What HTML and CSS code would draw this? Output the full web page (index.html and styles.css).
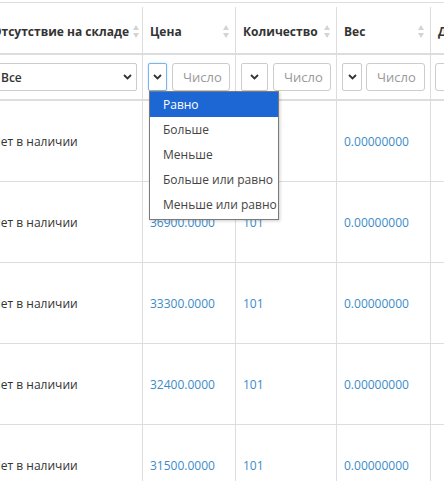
FILE: index.html
```html
<!DOCTYPE html>
<html lang="ru">
<head>
<meta charset="utf-8">
<title>Товары</title>
<link rel="stylesheet" href="styles.css">
</head>
<body>
<div class="page">
  <div class="topline"></div>
  <div class="tablewrap">
    <table class="grid">
      <colgroup>
        <col class="c1"><col class="c2"><col class="c3"><col class="c4"><col class="c5">
      </colgroup>
      <thead>
        <tr class="head-row">
          <th><div class="th-in"><span>Отсутствие на складе</span><span class="sort"><i class="up"></i><i class="down"></i></span></div></th>
          <th><div class="th-in"><span>Цена</span><span class="sort"><i class="up"></i><i class="down"></i></span></div></th>
          <th><div class="th-in"><span>Количество</span><span class="sort"><i class="up"></i><i class="down"></i></span></div></th>
          <th><div class="th-in"><span>Вес</span><span class="sort"><i class="up"></i><i class="down"></i></span></div></th>
          <th><div class="th-in"><span>Дата добавления</span><span class="sort"><i class="up"></i><i class="down"></i></span></div></th>
        </tr>
        <tr class="filter-row">
          <th>
            <div class="sel sel-wide"><span class="sel-text">Все</span>
              <svg class="chev" width="9" height="6" viewBox="0 0 9 6"><path d="M1 1 L4.5 4.5 L8 1" fill="none" stroke="#333" stroke-width="1.8"/></svg>
            </div>
          </th>
          <th>
            <div class="flt">
              <div class="sel sel-op sel-focus w19"><svg class="chev" width="9" height="6" viewBox="0 0 9 6"><path d="M1 1 L4.5 4.5 L8 1" fill="none" stroke="#333" stroke-width="1.8"/></svg></div>
              <div class="num">Число</div>
            </div>
          </th>
          <th>
            <div class="flt">
              <div class="sel sel-op w27"><svg class="chev" width="9" height="6" viewBox="0 0 9 6"><path d="M1 1 L4.5 4.5 L8 1" fill="none" stroke="#333" stroke-width="1.8"/></svg></div>
              <div class="num">Число</div>
            </div>
          </th>
          <th>
            <div class="flt gap4">
              <div class="sel sel-op w20"><svg class="chev" width="9" height="6" viewBox="0 0 9 6"><path d="M1 1 L4.5 4.5 L8 1" fill="none" stroke="#333" stroke-width="1.8"/></svg></div>
              <div class="num">Число</div>
            </div>
          </th>
          <th class="c5f">
            <div class="flt">
              <div class="num"></div>
            </div>
          </th>
        </tr>
      </thead>
      <tbody>
        <tr><td>Нет в наличии</td><td><a href="#">34200.0000</a></td><td><a href="#">101</a></td><td><a href="#">0.00000000</a></td><td></td></tr>
        <tr><td>Нет в наличии</td><td><a href="#">36900.0000</a></td><td><a href="#">101</a></td><td><a href="#">0.00000000</a></td><td></td></tr>
        <tr><td>Нет в наличии</td><td><a href="#">33300.0000</a></td><td><a href="#">101</a></td><td><a href="#">0.00000000</a></td><td></td></tr>
        <tr><td>Нет в наличии</td><td><a href="#">32400.0000</a></td><td><a href="#">101</a></td><td><a href="#">0.00000000</a></td><td></td></tr>
        <tr><td>Нет в наличии</td><td><a href="#">31500.0000</a></td><td><a href="#">101</a></td><td><a href="#">0.00000000</a></td><td></td></tr>
      </tbody>
    </table>
  </div>
  <ul class="dropdown">
    <li class="active">Равно</li>
    <li>Больше</li>
    <li>Меньше</li>
    <li>Больше или равно</li>
    <li>Меньше или равно</li>
  </ul>
</div>
</body>
</html>
```
FILE: styles.css
```css
html, body {
  margin: 0;
  padding: 0;
  background: #fff;
}
body {
  font-family: "Open Sans", "DejaVu Sans", sans-serif;
  font-size: 12px;
  color: #333;
}
.page {
  position: relative;
  width: 444px;
  height: 481px;
  overflow: hidden;
}
.topline {
  height: 2px;
  border-bottom: 1px solid #ddd;
}
.tablewrap {
  padding-top: 4px;
}
.grid {
  border-collapse: collapse;
  table-layout: fixed;
  width: 546px;
  margin-left: -16px;
}
.c1 { width: 158px; }
.c2 { width: 93px; }
.c3 { width: 101px; }
.c4 { width: 94px; }
.c5 { width: 100px; }
.grid th, .grid td {
  border: 1px solid #ddd;
  vertical-align: middle;
  text-align: left;
}
.head-row th {
  border-top: 0;
  border-bottom: 2px solid #ddd;
  height: 44px;
  padding: 2px 6px 0 7px;
  font-weight: 700;
  white-space: nowrap;
  overflow: hidden;
}
.th-in {
  display: flex;
  align-items: center;
  justify-content: space-between;
}
.sort {
  display: flex;
  flex-direction: column;
  gap: 3px;
  margin-left: 4px;
}
.sort i {
  display: block;
  width: 0;
  height: 0;
  border-left: 3px solid transparent;
  border-right: 3px solid transparent;
}
.sort .up { border-bottom: 5px solid #d4d4d4; }
.sort .down { border-top: 5px solid #d4d4d4; }
.filter-row th {
  border-bottom: 2px solid #ddd;
  height: 44px;
  padding: 0 5px;
  font-weight: 400;
}
.filter-row th.c5f { padding-left: 4px; }
.flt {
  display: flex;
  gap: 5px;
}
.flt.gap4 { gap: 4px; }
.sel {
  box-sizing: border-box;
  height: 28px;
  border: 1px solid #ccc;
  border-radius: 2px;
  background: #fff;
  display: flex;
  align-items: center;
  justify-content: center;
  flex: none;
}
.sel-wide {
  justify-content: space-between;
  padding: 0 4px 0 10px;
  font-weight: 600;
  color: #333;
}
.sel-focus {
  border-color: #7fb4e6;
  box-shadow: 0 0 2px rgba(102, 175, 233, 0.5);
}
.w19 { width: 19px; }
.w20 { width: 20px; }
.w27 { width: 27px; }
.chev { display: block; }
.num {
  box-sizing: border-box;
  flex: 1;
  height: 28px;
  border: 1px solid #ccc;
  border-radius: 3px;
  padding-left: 10px;
  line-height: 26px;
  color: #999;
  font-weight: 400;
  font-size: 13px;
}
.grid td {
  height: 80px;
  padding: 0 7px;
  white-space: nowrap;
  overflow: hidden;
}
.grid td a {
  color: #3b8bc9;
  text-decoration: none;
}
.dropdown {
  position: absolute;
  left: 149px;
  top: 91px;
  width: 130px;
  box-sizing: border-box;
  margin: 0;
  padding: 0 0 2px 0;
  list-style: none;
  background: #fff;
  border: 1px solid #7a7a7a;
  box-shadow: 1px 1px 3px rgba(0, 0, 0, 0.2);
}
.dropdown li {
  height: 25px;
  line-height: 25px;
  padding-left: 13px;
  color: #444;
  font-size: 12px;
  white-space: nowrap;
}
.dropdown li.active {
  background: #1c67d3;
  color: #fff;
}
```
